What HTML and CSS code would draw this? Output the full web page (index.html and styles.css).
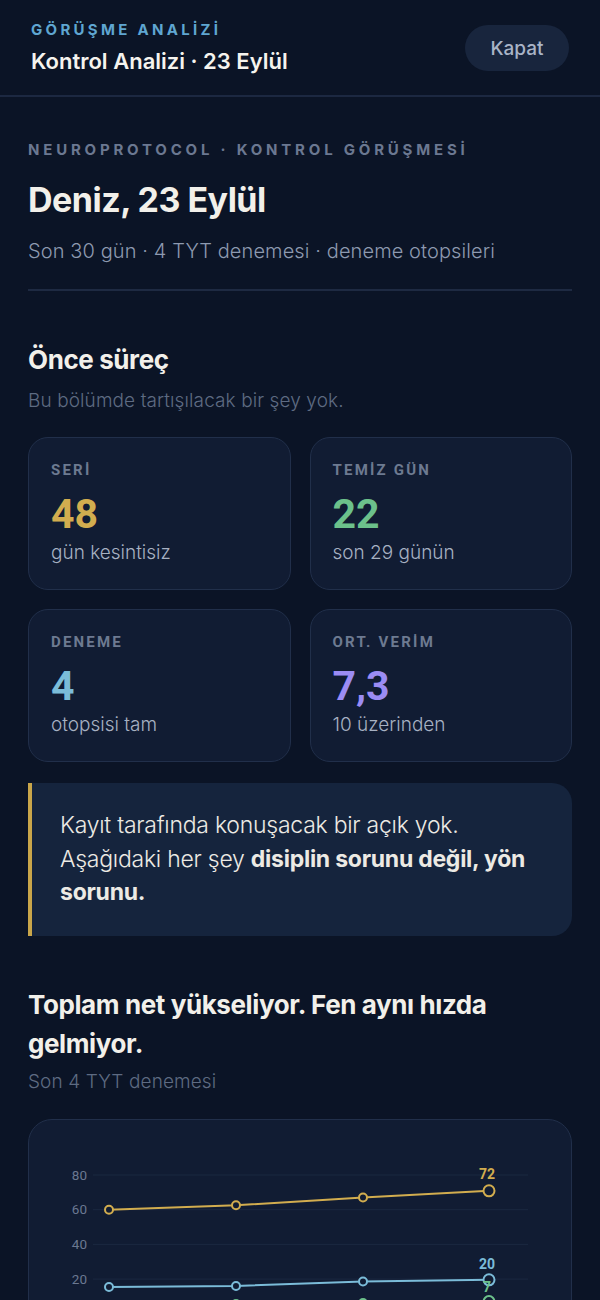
FILE: index.html
```html
<!DOCTYPE html>
<html lang="tr">
<head>
    <meta charset="UTF-8">
    <meta name="viewport" content="width=device-width, initial-scale=1.0">
    <title>Kontrol Analizi · 23 Eylül</title>
    <link rel="stylesheet" href="styles.css">
</head>
<body>
    <header class="topbar">
        <div class="topbar-text">
            <div class="topbar-label">GÖRÜŞME ANALİZİ</div>
            <div class="topbar-title">Kontrol Analizi · 23 Eylül</div>
        </div>
        <button class="close-btn">Kapat</button>
    </header>

    <main class="content">
        <div class="intro">
            <div class="eyebrow">NEUROPROTOCOL · KONTROL GÖRÜŞMESİ</div>
            <h1 class="title">Deniz, 23 Eylül</h1>
            <p class="subtitle">Son 30 gün · 4 TYT denemesi · deneme otopsileri</p>
        </div>

        <section class="section">
            <h2 class="section-title">Önce süreç</h2>
            <p class="section-sub">Bu bölümde tartışılacak bir şey yok.</p>

            <div class="stats">
                <div class="stat">
                    <div class="stat-label">SERİ</div>
                    <div class="stat-value gold">48</div>
                    <div class="stat-note">gün kesintisiz</div>
                </div>
                <div class="stat">
                    <div class="stat-label">TEMİZ GÜN</div>
                    <div class="stat-value green">22</div>
                    <div class="stat-note">son 29 günün</div>
                </div>
                <div class="stat">
                    <div class="stat-label">DENEME</div>
                    <div class="stat-value blue">4</div>
                    <div class="stat-note">otopsisi tam</div>
                </div>
                <div class="stat">
                    <div class="stat-label">ORT. VERİM</div>
                    <div class="stat-value purple">7,3</div>
                    <div class="stat-note">10 üzerinden</div>
                </div>
            </div>

            <div class="callout">
                Kayıt tarafında konuşacak bir açık yok. Aşağıdaki her şey <strong>disiplin sorunu değil, yön sorunu.</strong>
            </div>
        </section>

        <section class="section second">
            <h2 class="section-title big">Toplam net yükseliyor. Fen aynı hızda gelmiyor.</h2>
            <p class="section-sub tight">Son 4 TYT denemesi</p>

            <div class="chart-card">
                <svg class="chart" width="502" height="240" viewBox="0 0 502 240">
                    <g class="grid">
                        <line x1="44" y1="35" x2="479" y2="35"/>
                        <line x1="44" y1="69.7" x2="479" y2="69.7"/>
                        <line x1="44" y1="104.4" x2="479" y2="104.4"/>
                        <line x1="44" y1="139.1" x2="479" y2="139.1"/>
                        <line x1="44" y1="173.8" x2="479" y2="173.8"/>
                    </g>
                    <g class="axis">
                        <text x="38" y="39.5">80</text>
                        <text x="38" y="74.2">60</text>
                        <text x="38" y="108.9">40</text>
                        <text x="38" y="143.6">20</text>
                        <text x="38" y="178.3">0</text>
                    </g>

                    <!-- toplam net -->
                    <polyline class="line gold-line" points="60,69.7 187,65.3 314,57.5 440,50.8"/>
                    <circle class="dot gold-line" cx="60" cy="69.7" r="4"/>
                    <circle class="dot gold-line" cx="187" cy="65.3" r="4"/>
                    <circle class="dot gold-line" cx="314" cy="57.5" r="4"/>
                    <circle class="dot gold-line" cx="440" cy="50.8" r="5.5"/>
                    <text class="val gold-text" x="438" y="39">72</text>

                    <!-- türkçe -->
                    <polyline class="line blue-line" points="60,147 187,146 314,141.5 440,139.8"/>
                    <circle class="dot blue-line" cx="60" cy="147" r="4"/>
                    <circle class="dot blue-line" cx="187" cy="146" r="4"/>
                    <circle class="dot blue-line" cx="314" cy="141.5" r="4"/>
                    <circle class="dot blue-line" cx="440" cy="139.8" r="5.5"/>
                    <text class="val blue-text" x="438" y="129">20</text>

                    <!-- fen -->
                    <polyline class="line green-line" points="60,165 187,164 314,163 440,161.6"/>
                    <circle class="dot green-line" cx="60" cy="165" r="4"/>
                    <circle class="dot green-line" cx="187" cy="164" r="4"/>
                    <circle class="dot green-line" cx="314" cy="163" r="4"/>
                    <circle class="dot green-line" cx="440" cy="161.6" r="5.5"/>
                    <text class="val green-text" x="438" y="152">7</text>
                </svg>
            </div>
        </section>
    </main>
</body>
</html>
```

FILE: styles.css
```css
body {
    margin: 0;
    background: #0b1426;
    color: #f2f0ea;
    font-family: "Inter", "Noto Sans", sans-serif;
}

.topbar {
    display: flex;
    align-items: flex-start;
    justify-content: space-between;
    padding: 20px 31px 21px 31px;
    border-bottom: 2px solid #1c2841;
}
.topbar-label {
    font-size: 15px;
    font-weight: 700;
    letter-spacing: 3.3px;
    color: #5fa6d1;
    line-height: 20px;
}
.topbar-title {
    margin-top: 8px;
    font-size: 22px;
    font-weight: 600;
    color: #f5f3ee;
    line-height: 26px;
}
.close-btn {
    width: 104px;
    height: 46px;
    margin-top: 5px;
    border: none;
    border-radius: 23px;
    background: #18253d;
    color: #a9b4c7;
    font-family: "Inter", "Noto Sans", sans-serif;
    font-size: 19px;
    font-weight: 500;
}

.content {
    padding: 0 28px;
}
.intro {
    padding-top: 43px;
    padding-bottom: 24px;
    border-bottom: 2px solid #1e2a42;
}
.eyebrow {
    font-size: 15px;
    font-weight: 700;
    letter-spacing: 3.8px;
    color: #6b7891;
    line-height: 20px;
}
.title {
    margin: 19px 0 0;
    font-size: 34px;
    font-weight: 700;
    line-height: 42px;
    letter-spacing: -0.5px;
}
.subtitle {
    margin: 16px 0 0;
    font-size: 20px;
    font-weight: 300;
    color: #8e9ab0;
    line-height: 28px;
    letter-spacing: 0.1px;
}

.section {
    padding-top: 52px;
}
.section.second {
    padding-top: 49px;
}
.section-title {
    margin: 0;
    font-size: 26px;
    font-weight: 700;
    line-height: 34px;
    letter-spacing: -0.4px;
}
.section-title.big {
    font-size: 26px;
    line-height: 39px;
}
.section-sub {
    margin: 11px 0 0;
    font-size: 19px;
    font-weight: 300;
    color: #5e6b82;
    line-height: 26px;
    letter-spacing: 0.1px;
}
.section-sub.tight {
    margin-top: 6px;
}

.stats {
    display: grid;
    grid-template-columns: 1fr 1fr;
    gap: 19px 19px;
    margin-top: 23px;
}
.stat {
    height: 153px;
    box-sizing: border-box;
    padding: 23px 22px;
    background: #111c33;
    border: 1px solid #212f4a;
    border-radius: 20px;
}
.stat-label {
    font-family: "Roboto", sans-serif;
    font-size: 15px;
    font-weight: 700;
    letter-spacing: 2.2px;
    color: #6d7a91;
    line-height: 18px;
}
.stat-value {
    margin-top: 12px;
    font-family: "Roboto", sans-serif;
    font-size: 41px;
    font-weight: 700;
    line-height: 46px;
}
.stat-note {
    margin-top: 4px;
    font-size: 19px;
    font-weight: 300;
    color: #a7b1c2;
    line-height: 24px;
}
.gold { color: #d2ad4f; }
.green { color: #6cc18b; }
.blue { color: #7bbcd9; }
.purple { color: #9b8cf4; }

.callout {
    margin-top: 21px;
    padding: 26px 24px 26px 28px;
    background: #15243d;
    border-left: 4px solid #c9a64a;
    border-radius: 0 20px 20px 0;
    font-size: 23px;
    font-weight: 300;
    line-height: 33.5px;
    letter-spacing: -0.25px;
    color: #eceae4;
}
.callout strong {
    font-weight: 700;
}

.chart-card {
    margin-top: 24px;
    padding: 20px;
    height: 300px;
    background: #111c33;
    border: 1px solid #212f4a;
    border-radius: 24px;
}
.chart {
    display: block;
}
.grid line {
    stroke: #1b2840;
    stroke-width: 1;
}
.axis text {
    font-family: "Roboto", sans-serif;
    font-size: 13.5px;
    fill: #6b7891;
    text-anchor: end;
}
.line {
    fill: none;
    stroke-width: 2;
}
.dot {
    fill: #111c33;
    stroke-width: 2;
}
.gold-line { stroke: #d2ad4f; }
.blue-line { stroke: #7bbcd9; }
.green-line { stroke: #6cc18b; }
.val {
    font-family: "Roboto", sans-serif;
    font-size: 14px;
    font-weight: 700;
    text-anchor: middle;
}
.gold-text { fill: #d2ad4f; }
.blue-text { fill: #7bbcd9; }
.green-text { fill: #6cc18b; }
```
